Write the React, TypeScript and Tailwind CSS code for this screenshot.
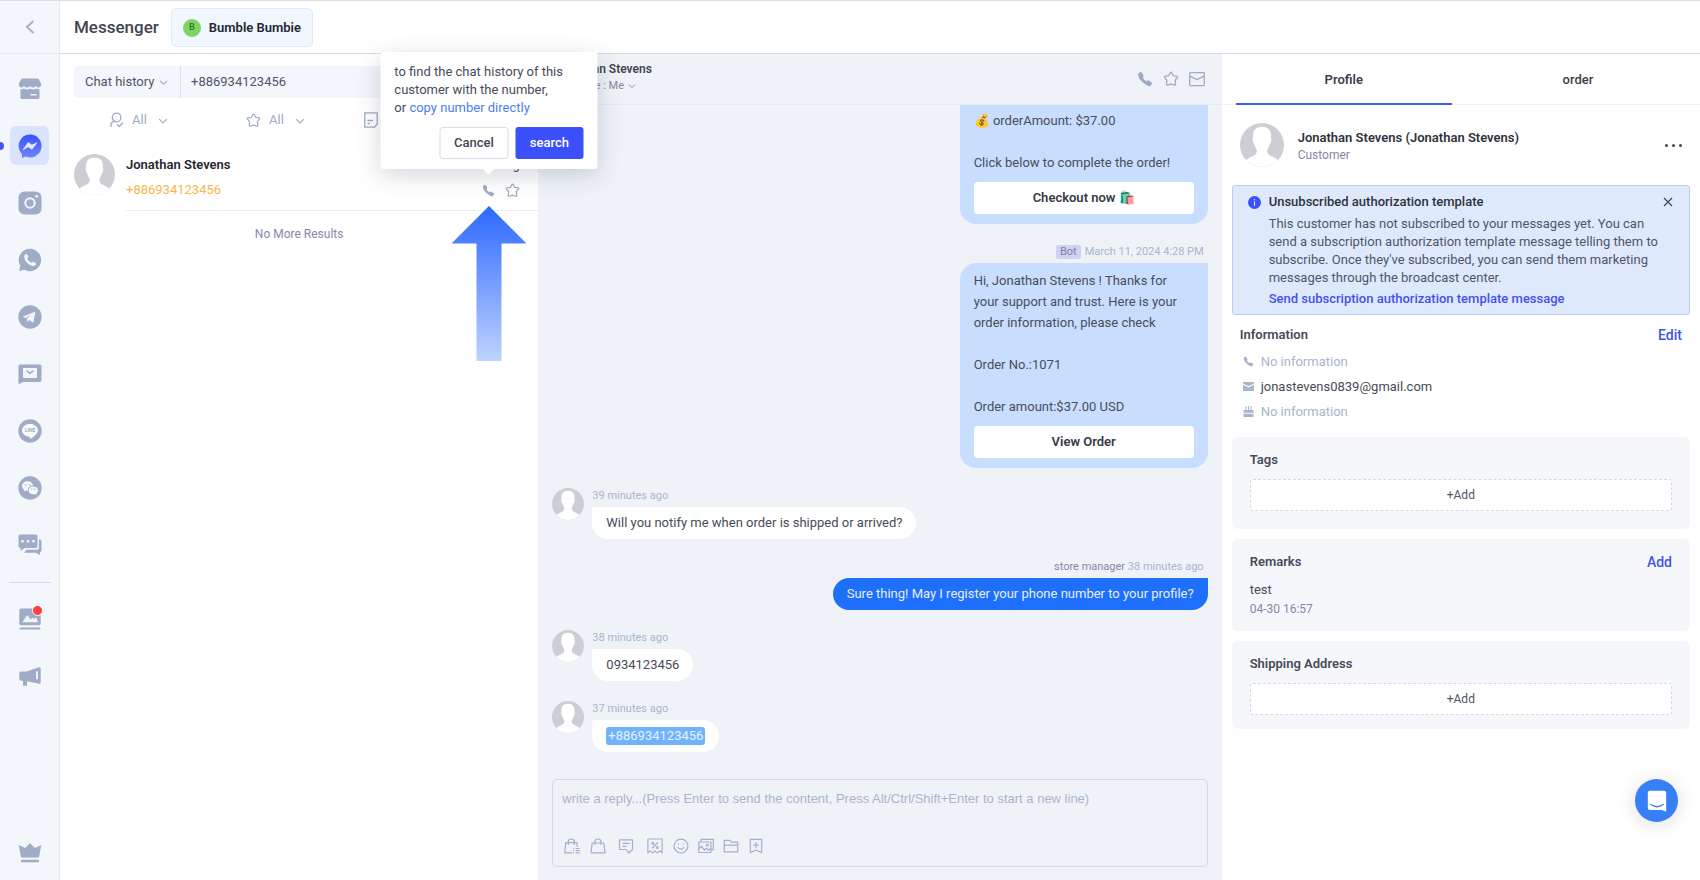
/**
 * App.tsx
 * =======
 * Messenger inbox: channel rail, conversation list, chat thread and
 * customer profile.
 *
 * Section map
 * -----------
 * ChannelRail       left icon rail, one button per channel
 * ConversationList  search, filters and results
 * ChatThread        messages and reply composer
 * ProfilePanel      customer details
 */

import type { ReactNode } from 'react'
import { IoCall } from 'react-icons/io5'

// ---------------------------------------------------------------------------
// Icons
// ---------------------------------------------------------------------------

interface IconProps {
  className?: string
}

function ChevronDown({ className = 'w-[9px] h-[9px]' }: IconProps) {
  return (
    <svg viewBox="0 0 10 10" className={className} fill="none" stroke="currentColor" strokeWidth="1.2" aria-hidden="true">
      <path d="M1.2 3.2 5 7l3.8-3.8" />
    </svg>
  )
}

function StarIcon({ className = 'w-4 h-4' }: IconProps) {
  return (
    <svg viewBox="0 0 16 16" className={className} fill="none" stroke="currentColor" strokeWidth="1.3" strokeLinejoin="round" aria-hidden="true">
      <path d="M7.3 1.7q.7-1.1 1.4 0l1.5 2.9 3.8.7q1.1.4.4 1.3l-2.3 2.6.5 4.1q-.1 1.2-1.2.8L8 12.9l-3.4 1.2q-1.1.4-1.2-.8l.5-4.1-2.3-2.6q-.7-.9.4-1.3l3.8-.7Z" />
    </svg>
  )
}

function MailIcon({ className = 'w-4 h-4' }: IconProps) {
  return (
    <svg viewBox="0 0 16 16" className={className} fill="none" stroke="currentColor" strokeWidth="1.3" strokeLinejoin="round" aria-hidden="true">
      <rect x=".7" y="1.7" width="14.6" height="12.9" rx=".8" />
      <path d="m.9 5.2 7.1 3.5 7.1-3.5" />
    </svg>
  )
}

function StoreIcon() {
  return (
    <svg viewBox="0 0 24 24" className="w-6 h-6" fill="currentColor" aria-hidden="true">
      <path d="M4.5 1.5h15q.9 0 1.3.8l2.3 4.5q.4 3.4-2 3.6-2 .1-3.1-1.5-1.2 1.5-3 1.5t-3-1.5q-1.2 1.5-3 1.5t-3-1.5q-1.2 1.6-3.1 1.5-2.4-.2-2-3.6l2.3-4.5q.4-.8 1.3-.8Z" />
      <path fillRule="evenodd" d="M2.5 12.2q2 .4 3.5-.7 1.3.9 3 .9t3-.9q1.3.9 3 .9t3-.9q1.5 1.1 3.5.7v8.3q0 1.5-1.5 1.5H4q-1.5 0-1.5-1.5Zm10 4.8v1.6h6V17Z" />
    </svg>
  )
}

function MessengerIcon() {
  return (
    <svg viewBox="0 0 24 24" className="w-6 h-6" aria-hidden="true">
      <defs>
        <linearGradient id="messenger" x1="0" y1="0" x2="0" y2="1">
          <stop offset="0" stopColor="#3a50fb" />
          <stop offset="1" stopColor="#7186fb" />
        </linearGradient>
      </defs>
      <path fill="url(#messenger)" d="M12 .5a11.5 11.5 0 1 1-4.4 22.1L4 24l-.2-4.1A11.5 11.5 0 0 1 12 .5Z" />
      <path d="m4.900 15.600 4.700-6.900q.6-.6 1.300-.1l2.900 2.200 5.100-2.400q.6-.1.3.5l-4.700 6.200q-.6.6-1.300.1l-2.900-2.200-4.900 2.900q-.6.2-.5-.3Z" fill="#e3ebff" />
    </svg>
  )
}

function InstagramIcon() {
  return (
    <svg viewBox="0 0 24 24" className="w-6 h-6" aria-hidden="true">
      <rect x=".5" y=".5" width="23" height="23" rx="6" fill="currentColor" />
      <circle cx="12" cy="12" r="4.7" fill="none" stroke="#f3f6fb" strokeWidth="2" />
      <circle cx="18.7" cy="5.3" r="1.4" fill="#f3f6fb" />
    </svg>
  )
}

function WhatsAppIcon() {
  return (
    <svg viewBox="0 0 24 24" className="w-6 h-6" aria-hidden="true">
      <path fill="currentColor" d="M12 .8A11.2 11.2 0 1 1 6.5 21.8L1 23l1.3-5.3A11.2 11.2 0 0 1 12 .8Z" />
      <path fill="#f3f6fb" d="M6.3 8.3c.2-1.7 1.7-2.5 2.5-2.1.6.3 1.5 2.3 1.4 2.9 0 .7-1 1.1-.8 1.7.4 1.6 2.3 3.4 3.9 3.9.7.2 1.1-.9 1.8-.9.7 0 2.7 1.1 2.9 1.7.3.9-1 2.5-2.7 2.5-4.6-.2-9.2-5-9-9.7Z" />
    </svg>
  )
}

function TelegramIcon() {
  return (
    <svg viewBox="0 0 24 24" className="w-6 h-6" aria-hidden="true">
      <circle cx="12" cy="12" r="11.7" fill="currentColor" />
      <path fill="#f3f6fb" d="m5 11.5 11.6-4.6q.8-.2.7.7l-1.8 9.2q-.3 1-1.2.4l-3-2.2-1.5 1.5q-.6.4-.7-.5l-.1-2.4 4.7-4.3-5.9 3.7-2.7-.9q-.6-.3-.1-.6Z" />
    </svg>
  )
}

function InboxMailIcon() {
  return (
    <svg viewBox="0 0 24 24" className="w-6 h-6" aria-hidden="true">
      <path fill="currentColor" d="M2.2 2.5h19.6q1.7 0 1.7 1.7v14q0 1.7-1.7 1.7H5L.5 22.2v-18q0-1.7 1.7-1.7Z" />
      <rect x="5" y="6" width="14" height="10" rx=".8" fill="#f3f6fb" />
      <path d="m8.5 8.7 3.5 2.7 3.5-2.7" fill="none" stroke="currentColor" strokeWidth="1.5" />
    </svg>
  )
}

function LineIcon() {
  return (
    <svg viewBox="0 0 24 24" className="w-6 h-6" aria-hidden="true">
      <circle cx="12" cy="12" r="11.7" fill="currentColor" />
      <path fill="#f9fbfe" d="M12 5c4.4 0 7.9 2.7 7.9 6.2 0 3-3.4 6.2-7.6 8.6-.7.3-.3-1.5-.8-2-4.2-.3-7.4-3.1-7.4-6.6C4.1 7.7 7.6 5 12 5Z" />
      <text x="12" y="13" textAnchor="middle" fontSize="5" fontWeight="700" fill="currentColor">LINE</text>
    </svg>
  )
}

function WeChatIcon() {
  return (
    <svg viewBox="0 0 24 24" className="w-6 h-6" aria-hidden="true">
      <circle cx="12" cy="12" r="11.7" fill="currentColor" />
      <path fill="#f3f6fb" d="M9.5 5.2c3 0 5.5 2 5.6 4.4-3.2.1-5.6 2.2-5.2 5.2-.9 0-1.6-.1-2.3-.3l-1.9 1 .4-2C4.8 12.6 4 11.4 4 10c0-2.7 2.5-4.8 5.5-4.8Z" />
      <path fill="#f3f6fb" d="M15.3 10.5c2.6 0 4.7 1.7 4.7 3.9 0 1.2-.6 2.2-1.6 2.9l.3 1.6-1.6-.8c-3.6.9-6.5-1.1-6.5-3.7 0-2.2 2.1-3.9 4.7-3.9Z" />
      <g fill="currentColor">
        <circle cx="7.8" cy="8.8" r=".7" />
        <circle cx="11.6" cy="8.8" r=".7" />
        <circle cx="13.8" cy="13.2" r=".6" />
        <circle cx="16.8" cy="13.2" r=".6" />
      </g>
    </svg>
  )
}

function ChatsIcon() {
  return (
    <svg viewBox="0 0 24 24" className="w-6 h-6" fill="currentColor" aria-hidden="true">
      <path fillRule="evenodd" d="M2.2 1.5h15.6q1.7 0 1.7 1.7v10q0 1.7-1.7 1.7H6.5L2.8 18l-.3-3.1Q.5 14.9.5 13.2v-10q0-1.7 1.7-1.7Zm2.3 5.3a1.4 1.4 0 1 0 .01 0Zm5.5 0a1.4 1.4 0 1 0 .01 0Zm5.5 0a1.4 1.4 0 1 0 .01 0Z" />
      <path d="M21 6.2q2.5 0 2.5 2.2v9.2q0 1.3-1.5 1.5v2.9l-4.2-2.3H6.2l2.3-2.9h10q2.5 0 2.5-2Z" />
    </svg>
  )
}

function GalleryIcon() {
  return (
    <svg viewBox="0 0 24 24" className="w-6 h-6" aria-hidden="true">
      <rect x="1.3" y="1.5" width="21.4" height="16.8" rx="1.7" fill="currentColor" />
      <path fill="#f3f6fb" d="m4.3 15.2 4.5-6.5q.6-.7 1.2 0l2.6 3.9 1.3-1.6q.5-.5 1 0l.9 1 1.9-1.4q.5-.2.8.3l1.5 4.3Z" />
      <rect x="1.5" y="20.5" width="21" height="2" rx="1" fill="currentColor" />
    </svg>
  )
}

function MegaphoneIcon() {
  return (
    <svg viewBox="0 0 24 24" className="w-6 h-6" fill="currentColor" aria-hidden="true">
      <path fillRule="evenodd" d="M3 7.5h5.5L21 3.3q1.7-.4 1.7 1.2v14q0 1.7-1.7 1.3L9 17.2v4.5H5v-5H3q-1.7 0-1.7-1.7V9.2Q1.3 7.5 3 7.5Zm15-.2v8h1.9v-8Z" />
    </svg>
  )
}

function CrownIcon() {
  return (
    <svg viewBox="0 0 24 24" className="w-6 h-6" fill="currentColor" aria-hidden="true">
      <path d="m12 2 4.8 5 6.5-3-2.2 11.5q-.2.9-1 .9H3.9q-.8 0-1-.9L.7 4l6.5 3Z" />
      <rect x="3" y="18.7" width="18" height="2.6" rx="1" />
    </svg>
  )
}

// Outline icons of the composer toolbar, all on a 16px grid
const TOOLBAR: { label: string; className: string; icon: ReactNode }[] = [
  {
    label: 'Order list',
    className: 'mr-[10px]',
    icon: (
      <path d="M8.5 14.8H.8l.9-10.2h11.2l.4 4.2M4.3 7V3.6Q4.3 1 7.3 1t3 2.6V7M9.2 10.5h1m1.5 0h4M9.2 12.7h1m1.5 0h4M9.2 14.9h1m1.5 0h4" />
    ),
  },
  {
    label: 'Products',
    className: 'mr-[12px]',
    icon: <path d="M2.2 5h11.6L15 14.8H1ZM5 7V4q0-3 3-3t3 3v3" />,
  },
  {
    label: 'Quick reply',
    className: 'mr-[13px]',
    icon: <path d="M1.5 1.8h13v9.7l-3.8 3.5-2.5-3.5H1.5ZM4.3 5.3h7.4M4.3 8.3h4.5" />,
  },
  {
    label: 'Discount',
    className: 'mr-[10px]',
    icon: (
      <>
        <path d="M.9 14.9V1h14.2v13.9l-2.3-2-2.4 2-2.4-2-2.4 2-2.4-2ZM5 10.3 11 4.5" />
        <circle cx="5.8" cy="5.3" r="1" />
        <circle cx="10.3" cy="9.5" r="1" />
      </>
    ),
  },
  {
    label: 'Emoji',
    className: 'mr-[9px]',
    icon: (
      <>
        <circle cx="8" cy="8" r="6.9" />
        <path d="M5.5 5.5v1.3m5-1.3v1.3M4.7 9.3q3.3 3.7 6.6 0" />
      </>
    ),
  },
  {
    label: 'Images',
    className: 'mr-[9px]',
    icon: (
      <>
        <path d="M3 4V1.3h12.3v10.5H13M.8 4h12.1v10.5H.8ZM1 10.500l2.500-2.200 3 3.700 2-1.800 2 2 2.300-2" />
        <circle cx="9.4" cy="7" r=".9" />
      </>
    ),
  },
  {
    label: 'Files',
    className: 'mr-[9px]',
    icon: <path d="M1.2 13.8V2.3h5.5l1.6 1.9h6.5v9.6ZM1.2 7.2h13.6" />,
  },
  {
    label: 'Save reply',
    className: '',
    icon: <path d="M2.3 14.8V1.3h11.4v13.5L8 12ZM8 4.3v5.6M5.2 7.1h5.6" />,
  },
]

// ---------------------------------------------------------------------------
// Avatar: grey disc with a white silhouette
// ---------------------------------------------------------------------------

function Avatar({ className }: { className: string }) {
  return (
    <svg viewBox="0 0 40 40" className={`shrink-0 rounded-full bg-[#cdced4] ${className}`} aria-hidden="true">
      <path
        fill="#fff"
        d="M20 3.500c6 0 8.500 3.500 8.200 9.500-.1 1.200.5 1 .3 3-.3 2.300-1.200 2.200-1.700 4-.6 2.300-2 3.800-2.100 5 0 2.800 1.300 4.200 4.500 5.500 3 1.300 4.800 2.500 6.300 4.500V40h-31v-5c1.500-2 3.300-3.200 6.300-4.500 3.200-1.300 4.500-2.700 4.500-5.500-.1-1.200-1.500-2.700-2.100-5-.5-1.800-1.400-1.700-1.700-4-.2-2 .4-1.800.3-3-.3-6 2.200-9.500 8.200-9.500Z"
      />
    </svg>
  )
}

// ---------------------------------------------------------------------------
// ChannelRail
// ---------------------------------------------------------------------------

const CHANNELS: { label: string; icon: ReactNode; active?: boolean }[] = [
  { label: 'Store', icon: <StoreIcon /> },
  { label: 'Messenger', icon: <MessengerIcon />, active: true },
  { label: 'Instagram', icon: <InstagramIcon /> },
  { label: 'WhatsApp', icon: <WhatsAppIcon /> },
  { label: 'Telegram', icon: <TelegramIcon /> },
  { label: 'Email', icon: <InboxMailIcon /> },
  { label: 'Line', icon: <LineIcon /> },
  { label: 'WeChat', icon: <WeChatIcon /> },
  { label: 'Live chat', icon: <ChatsIcon /> },
]

function RailButton({ label, active = false, children }: { label: string; active?: boolean; children: ReactNode }) {
  return (
    <button
      type="button"
      aria-label={label}
      className={`relative flex items-center justify-center w-[39px] h-[39px] rounded-md ${active ? 'bg-[#d9e3fb]' : ''}`}
    >
      {children}
    </button>
  )
}

function ChannelRail() {
  return (
    <nav className="flex flex-col items-center w-[60px] shrink-0 bg-[#f3f6fb] border-r border-[#e6ebf1] text-[#9facc6]">
      <button
        type="button"
        aria-label="Back"
        className="flex items-center justify-center w-full h-[53px] shrink-0 border-b border-[#e4e8f0]"
      >
        <svg viewBox="0 0 10 14" className="w-[10px] h-[14px]" fill="none" stroke="#adb1c3" strokeWidth="2" aria-hidden="true">
          <path d="M8.5 1 2 7l6.5 6" />
        </svg>
      </button>

      <div className="flex flex-col items-center gap-[18px] w-full pt-[15px]">
        {CHANNELS.map((c) => (
          <div key={c.label} className="relative flex justify-center w-full">
            {c.active && <span className="absolute -left-1 top-4 w-2 h-2 rounded-full bg-[#3d5afc]" />}
            <RailButton label={c.label} active={c.active}>{c.icon}</RailButton>
          </div>
        ))}
      </div>

      <div className="w-[42px] mt-[18px] mb-4 border-t border-[#d3dae8]" />

      <div className="flex flex-col items-center gap-[18px]">
        <RailButton label="Gallery">
          <GalleryIcon />
          <span className="absolute right-[6px] top-[6px] w-[11px] h-[11px] rounded-full bg-[#fc4141] border border-white" />
        </RailButton>
        <RailButton label="Broadcast"><MegaphoneIcon /></RailButton>
      </div>

      <div className="mt-auto pb-2">
        <RailButton label="Upgrade"><CrownIcon /></RailButton>
      </div>
    </nav>
  )
}

// ---------------------------------------------------------------------------
// ConversationList
// ---------------------------------------------------------------------------

function Filter({ label, icon }: { label: string; icon: ReactNode }) {
  return (
    <label className="relative flex items-center gap-2 w-fit text-[#9faac4]">
      {icon}
      <select aria-label={label} className="appearance-none w-9 text-[13px] bg-transparent outline-none">
        <option>All</option>
      </select>
      <ChevronDown className="absolute right-0 top-[6px] w-[10px] h-[10px] pointer-events-none" />
    </label>
  )
}

function SearchPopover() {
  return (
    <div
      role="dialog"
      aria-label="Search by number"
      className="absolute z-20 bottom-7 left-1/2 -translate-x-1/2 w-[217px] h-[117px] px-[14px] pt-[11px] bg-white rounded-[3px] shadow-[0_6px_24px_rgba(40,50,80,0.2)]"
    >
      <p className="text-[13px] leading-[18px] text-[#474b5a] whitespace-nowrap">
        to find the chat history of this
        <br />
        customer with the number,
        <br />
        or <a href="#copy" className="text-[#4d7df0]">copy number directly</a>
      </p>
      <div className="flex justify-end gap-[7px] mt-[10px]">
        <button type="button" className="w-[69px] h-8 rounded-[3px] border border-[#d9dbe7] text-[13px] font-medium text-[#42464f]">
          Cancel
        </button>
        <button type="button" className="w-[68px] h-8 rounded-[3px] bg-[#3b50fb] text-[13px] font-medium text-white">
          search
        </button>
      </div>
      <span className="absolute left-1/2 -bottom-1 -translate-x-1/2 w-2 h-2 rotate-45 bg-white" />
    </div>
  )
}

// Large pointer drawn under the call button
function PointerArrow() {
  return (
    <svg viewBox="0 0 75 155" className="absolute z-10 left-1/2 top-[22px] -translate-x-1/2 w-[75px] h-[155px] max-w-none pointer-events-none" aria-hidden="true">
      <defs>
        <linearGradient id="pointer" x1="0" y1="0" x2="0" y2="1">
          <stop offset="0" stopColor="#2c68ff" />
          <stop offset="1" stopColor="#bed3ff" />
        </linearGradient>
      </defs>
      <path fill="url(#pointer)" d="M37.5 0 75 37.5H50V155H25V37.5H0Z" />
    </svg>
  )
}

function ConversationList() {
  return (
    <section className="min-w-0 bg-white">
      <div className="flex h-8 mx-[14px] mt-3 rounded bg-[#f3f6fb] text-[13px] text-[#50556a]">
        <label className="relative flex items-center w-[107px] shrink-0 border-r border-[#d9dee9]">
          <select aria-label="Search in" className="appearance-none w-full h-full pl-[11px] bg-transparent outline-none">
            <option>Chat history</option>
          </select>
          <ChevronDown className="absolute right-3 w-[9px] h-[9px] text-[#9faac4] pointer-events-none" />
        </label>
        <input aria-label="Search" defaultValue="+886934123456" className="flex-1 min-w-0 px-[10px] bg-transparent outline-none" />
      </div>

      <div className="grid grid-cols-[136px_118px_auto] items-center h-11 pl-[50px]">
        <Filter
          label="Assignee"
          icon={
            <svg viewBox="0 0 14 16" className="w-[14px] h-4" fill="none" stroke="currentColor" strokeWidth="1.3" aria-hidden="true">
              <circle cx="6.6" cy="5.5" r="4.3" />
              <path d="M1 15v-2.5q.3-2.5 3.2-3M7 12.5l2.2 2 3.8-3.8" />
            </svg>
          }
        />
        <Filter label="Starred" icon={<StarIcon className="w-[15px] h-[15px]" />} />
        <Filter
          label="Notes"
          icon={
            <svg viewBox="0 0 14 16" className="w-[14px] h-4" fill="none" stroke="currentColor" strokeWidth="1.3" aria-hidden="true">
              <path d="M.8.9h12.4v11l-2.7 3.2H.8ZM3.5 8.5H9M3.5 11.5h2.5" />
            </svg>
          }
        />
      </div>

      <div className="flex pl-[14px] pt-3">
        <Avatar className="w-[41px] h-[41px]" />
        <div className="flex-1 ml-[11px] h-[57px] border-b border-[#eceef6] pr-3">
          <div className="flex justify-between h-[22px] items-center">
            <h2 className="text-[13px] font-semibold text-[#24272f]">Jonathan Stevens</h2>
            <time className="text-xs text-[#474b5a]">37 minutes ago</time>
          </div>
          <div className="flex justify-between items-center h-7 pr-[6px]">
            <span className="text-[13px] text-[#f8b64c]">+886934123456</span>
            <div className="flex items-center gap-[10px] text-[#9faac4]">
              <div className="relative flex">
                <SearchPopover />
                <button type="button" aria-label="Call"><IoCall className="w-[13px] h-[13px]" /></button>
                <PointerArrow />
              </div>
              <button type="button" aria-label="Star"><StarIcon className="w-[15px] h-[15px]" /></button>
            </div>
          </div>
        </div>
      </div>

      <p className="mt-[14px] text-xs leading-[18px] text-center text-[#8588a5]">No More Results</p>
    </section>
  )
}

// ---------------------------------------------------------------------------
// ChatThread
// ---------------------------------------------------------------------------

function Incoming({ time, children }: { time: string; children: ReactNode }) {
  return (
    <div className="flex gap-2">
      <Avatar className="w-8 h-8 mt-px" />
      <div>
        <p className="h-5 text-[11px] leading-[18px] text-[#a9b4cd]">{time}</p>
        <div className="flex items-center w-fit h-8 px-[14px] rounded-2xl rounded-tl-none bg-white text-[13px] text-[#474b57]">
          {children}
        </div>
      </div>
    </div>
  )
}

function CardBubble({ lines, action, className }: { lines: string; action: string; className: string }) {
  return (
    <div className={`w-[248px] px-[14px] pt-[7px] pb-[10px] bg-[#c9ddfe] ${className}`}>
      <p className="text-[13px] leading-[21px] text-[#474d5c] whitespace-pre-line">{lines}</p>
      <button type="button" className="block w-full h-8 mt-[9px] rounded bg-white text-[13px] font-semibold text-[#363a45]">
        {action}
      </button>
    </div>
  )
}

function ChatThread() {
  return (
    <section className="flex flex-col min-w-0 min-h-0 bg-[#eff3f8]">
      <div className="flex items-center justify-between h-[51px] shrink-0 px-[17px] border-b border-[#e6ebf2]">
        <div className="pb-1">
          <h2 className="text-xs leading-[18px] font-semibold text-[#42454f]">Jonathan Stevens</h2>
          <button type="button" className="flex items-center gap-1 text-[11px] leading-4 text-[#8588a5]">
            Assignee : Me <ChevronDown className="w-2 h-2" />
          </button>
        </div>
        <div className="flex items-center gap-[10px] text-[#9faac4]">
          <button type="button" aria-label="Call"><IoCall className="w-4 h-4" /></button>
          <button type="button" aria-label="Star"><StarIcon className="w-4 h-4" /></button>
          <button type="button" aria-label="Mark unread"><MailIcon className="w-4 h-4" /></button>
        </div>
      </div>

      <div className="flex flex-col justify-end flex-1 min-h-0 gap-[19px] px-[14px] overflow-hidden">
        <div className="self-end">
          <CardBubble
            className="rounded-b-2xl"
            lines={'💰 orderAmount: $37.00\n\nClick below to complete the order!'}
            action="Checkout now 🛍️"
          />
        </div>

        <div className="self-end">
          <p className="flex items-start justify-end gap-1 h-5 pr-1 text-[11px] leading-[18px] text-[#a9b4cd]">
            <span className="h-[14px] mt-[2px] px-1 rounded-[2px] bg-[#d0d2f0] leading-[14px] text-[#7f82a8]">Bot</span>
            March 11, 2024 4:28 PM
          </p>
          <CardBubble
            className="rounded-2xl rounded-tr-none"
            lines={'Hi, Jonathan Stevens ! Thanks for\nyour support and trust. Here is your\norder information, please check\n\nOrder No.:1071\n\nOrder amount:$37.00 USD'}
            action="View Order"
          />
        </div>

        <Incoming time="39 minutes ago">Will you notify me when order is shipped or arrived?</Incoming>

        <div className="self-end">
          <p className="h-5 pr-1 text-right text-[11px] leading-[18px] text-[#a9b4cd]">
            <span className="text-[#8588a5]">store manager</span> 38 minutes ago
          </p>
          <div className="flex items-center h-8 px-[14px] rounded-2xl rounded-tr-none bg-[#1e6ffb] text-[13px] text-[#e6f0ff]">
            Sure thing! May I register your phone number to your profile?
          </div>
        </div>

        <Incoming time="38 minutes ago">0934123456</Incoming>
        <Incoming time="37 minutes ago">
          <mark className="px-[2px] rounded-[3px] bg-[#71b2fd] leading-[18px] text-[#e6f2ff]">+886934123456</mark>
        </Incoming>
      </div>

      <div className="flex flex-col justify-between h-[88px] shrink-0 mx-[14px] mt-[27px] mb-[13px] px-[9px] pt-[9px] pb-3 border border-[#d3d9e8] rounded-[5px]">
        <textarea
          aria-label="Reply"
          placeholder="write a reply...(Press Enter to send the content, Press Alt/Ctrl/Shift+Enter to start a new line)"
          className="w-full h-5 resize-none overflow-hidden bg-transparent font-['Liberation_Sans',sans-serif] text-[13px] leading-5 outline-none placeholder:text-[#a9b4cd]"
        />
        <div className="flex pl-[2px] text-[#a3afcc]">
          {TOOLBAR.map((t) => (
            <button key={t.label} type="button" aria-label={t.label} className={t.className}>
              <svg viewBox="0 0 16 16" className="w-4 h-4" fill="none" stroke="currentColor" strokeWidth="1.2" strokeLinejoin="round" aria-hidden="true">
                {t.icon}
              </svg>
            </button>
          ))}
        </div>
      </div>
    </section>
  )
}

// ---------------------------------------------------------------------------
// ProfilePanel
// ---------------------------------------------------------------------------

function Card({ title, action, className = '', children }: { title: string; action?: string; className?: string; children: ReactNode }) {
  return (
    <section className={`px-[18px] pt-[14px] rounded-md bg-[#f5f7fb] ${className}`}>
      <div className="flex justify-between text-[13px] leading-[18px]">
        <h3 className="font-semibold text-[#474b57]">{title}</h3>
        {action && <button type="button" className="text-sm leading-[18px] font-medium text-[#4252ef]">{action}</button>}
      </div>
      {children}
    </section>
  )
}

function AddButton() {
  return (
    <button type="button" className="block w-full h-8 mt-[10px] border border-dashed border-[#d3d9e4] rounded-[3px] bg-white text-xs text-[#50556a]">
      +Add
    </button>
  )
}

function ProfilePanel() {
  return (
    <section className="min-w-0 bg-white">
      <div role="tablist" className="grid grid-cols-2 gap-[18px] h-[51px] px-[14px] border-b border-[#eff3f8] text-[13px] text-[#3b3f4c]">
        <button type="button" role="tab" aria-selected="true" className="h-[51px] pt-[2px] border-b-2 border-[#3f5cf5] font-semibold">
          Profile
        </button>
        <button type="button" role="tab" aria-selected="false" className="h-[51px] font-medium">
          order
        </button>
      </div>

      <div className="flex items-center mt-[18px] px-[18px]">
        <Avatar className="w-[44px] h-[44px]" />
        <div className="ml-[14px] pt-[2px]">
          <h2 className="text-[13px] leading-[18px] font-semibold text-[#2f323c]">Jonathan Stevens (Jonathan Stevens)</h2>
          <p className="text-xs leading-4 text-[#8588a5]">Customer</p>
        </div>
        <button type="button" aria-label="More" className="flex gap-1 ml-auto">
          <span className="w-[3px] h-[3px] rounded-full bg-[#42454f]" />
          <span className="w-[3px] h-[3px] rounded-full bg-[#42454f]" />
          <span className="w-[3px] h-[3px] rounded-full bg-[#42454f]" />
        </button>
      </div>

      <div className="px-[10px]">
        <div className="flex items-start gap-2 h-[130px] mt-[18px] pl-[15px] pr-4 pt-[7px] rounded-[3px] border border-[#b8cdfb] bg-[#deeafc] text-[13px] leading-[18px]">
          <svg viewBox="0 0 14 14" className="w-[13px] h-[13px] mt-[3px] shrink-0" aria-hidden="true">
            <circle cx="7" cy="7" r="7" fill="#3b50fb" />
            <path d="M7 6v4.5M7 3.3v1.4" stroke="#deeafc" strokeWidth="1.2" />
          </svg>
          <div className="flex-1">
            <h3 className="font-medium text-[#2f323c]">Unsubscribed authorization template</h3>
            <p className="mt-1 text-[#50556a]">
              This customer has not subscribed to your messages yet. You can send a subscription authorization template message telling them to subscribe. Once they've subscribed, you can send them marketing messages through the broadcast center.
            </p>
            <a href="#send" className="block mt-[3px] font-medium text-[#4252ef]">Send subscription authorization template message</a>
          </div>
          <button type="button" aria-label="Dismiss" className="mt-1 -ml-2">
            <svg viewBox="0 0 10 10" className="w-[10px] h-[10px]" fill="none" stroke="#42454f" strokeWidth="1.2" aria-hidden="true">
              <path d="m1 1 8 8M9 1 1 9" />
            </svg>
          </button>
        </div>

        <div className="flex justify-between mt-[11px] px-2 text-[13px] leading-[18px]">
          <h3 className="font-semibold text-[#474b57]">Information</h3>
          <button type="button" className="text-sm leading-[18px] font-medium text-[#4252ef]">Edit</button>
        </div>
        <ul className="mt-[5px] pl-[11px] text-[13px] leading-[25px] text-[#a9b4cd]">
          <li className="flex items-center gap-[7px]">
            <IoCall className="w-[11px] h-[11px]" />
            No information
          </li>
          <li className="flex items-center gap-[7px]">
            <svg viewBox="0 0 11 9" className="w-[11px] h-[9px]" fill="currentColor" aria-hidden="true">
              <path d="M0 0h11v1.5L5.5 4.2 0 1.5ZM0 2.7l5.5 2.7L11 2.7V9H0Z" />
            </svg>
            <span className="text-[#474b57]">jonastevens0839@gmail.com</span>
          </li>
          <li className="flex items-center gap-[7px]">
            <svg viewBox="0 0 11 11" className="w-[11px] h-[11px]" fill="currentColor" aria-hidden="true">
              <path d="M2.5 0h1v4H5V0h1v4h1.5V0h1v4H10q.5 0 .5.5v2.3H.5V4.5Q.5 4 1 4h1.5ZM.5 7.8h10v2.7q0 .5-.5.5H1q-.5 0-.5-.5Z" />
            </svg>
            No information
          </li>
        </ul>

        <Card title="Tags" className="mt-[13px] pb-[18px]">
          <AddButton />
        </Card>
        <Card title="Remarks" action="Add" className="mt-[10px] pb-[13px]">
          <p className="mt-[10px] text-[13px] leading-[18px] text-[#474b57]">test</p>
          <p className="mt-px text-xs leading-[18px] text-[#8588a5]">04-30 16:57</p>
        </Card>
        <Card title="Shipping Address" className="mt-[10px] pb-[14px]">
          <AddButton />
        </Card>
      </div>
    </section>
  )
}

// ---------------------------------------------------------------------------
// App
// ---------------------------------------------------------------------------

export default function App() {
  return (
    <div className="flex h-screen overflow-hidden border-t border-[#dddddf] bg-white font-['Roboto','Noto_Sans',sans-serif]">
      <ChannelRail />

      <main className="flex flex-col flex-1 min-w-0">
        <header className="flex items-center gap-3 h-[53px] shrink-0 pl-[14px] pt-px border-b border-[#d6d9e6]">
          <h1 className="text-[17px] font-medium text-[#42454f]">Messenger</h1>
          <button type="button" className="flex items-center gap-2 h-[39px] px-[11px] rounded-[5px] border border-[#e2ebf5] bg-[#f0f7ff] text-[13px] font-semibold text-[#24272f]">
            <span className="flex items-center justify-center w-[18px] h-[18px] rounded-full bg-[#80d462] text-[9px] font-semibold text-[#2c7a34]">B</span>
            Bumble Bumbie
          </button>
        </header>

        <div className="grid grid-cols-[7fr_10fr_7fr] flex-1 min-h-0">
          <ConversationList />
          <ChatThread />
          <ProfilePanel />
        </div>
      </main>

      <button
        type="button"
        aria-label="Open support chat"
        className="fixed right-[22px] bottom-[58px] flex items-center justify-center w-[43px] h-[43px] rounded-full bg-[#377ff5] shadow-[0_2px_20px_rgba(0,0,0,0.14)]"
      >
        <svg viewBox="0 0 20 22" className="w-5 h-[22px]" aria-hidden="true">
          <path fill="#fff" d="M3 .8h14q2.2 0 2.2 2.2v18.6L14.5 20H3Q.8 20 .8 17.8V3Q.8.8 3 .8Z" />
          <path d="M3.8 14.5q6.2 4.5 12.4 0" fill="none" stroke="#377ff5" strokeWidth="1.3" strokeLinecap="round" />
        </svg>
      </button>
    </div>
  )
}
